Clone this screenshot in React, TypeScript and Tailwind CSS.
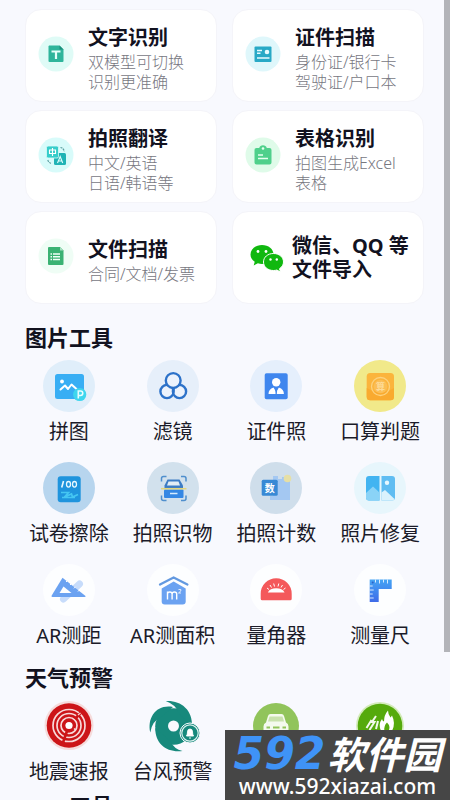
import React from 'react';

type Feature = {
  title: string;
  lines: string[];
  icon: React.ReactNode;
};

type Tool = {
  name: string;
  label?: string;
  icon: React.ReactNode;
};

const features: Feature[] = [
  {
    title: '文字识别',
    lines: ['双模型可切换', '识别更准确'],
    icon: (
      <>
        <circle cx="18" cy="18" r="17.5" fill="#dffbf6" />
        <path d="M11 9.5h10.5l4 4V25a1 1 0 0 1-1 1h-13a1 1 0 0 1-1-1V10.5z" fill="#2fb59b" />
        <path d="M21.5 9.5l4 4h-4z" fill="#1b8f7c" />
        <path d="M13.5 15.5h9M18 15.5v7.5" stroke="#e6fffa" strokeWidth="2.2" />
      </>
    ),
  },
  {
    title: '证件扫描',
    lines: ['身份证/银行卡', '驾驶证/户口本'],
    icon: (
      <>
        <circle cx="18" cy="18" r="17.5" fill="#dff7fb" />
        <rect x="9.5" y="10.5" width="17" height="15.5" rx="1" fill="#28a9c6" />
        <path d="M12 14.500h5M12 17.200h3.500M12 22h12.500" stroke="#e6fbff" strokeWidth="1.5" />
        <circle cx="22" cy="16" r="2.3" fill="#e6fbff" />
      </>
    ),
  },
  {
    title: '拍照翻译',
    lines: ['中文/英语', '日语/韩语等'],
    icon: (
      <>
        <circle cx="18" cy="18" r="17.5" fill="#d8fbfa" />
        <rect x="16" y="16" width="12" height="12" rx="1.5" fill="#1fb3b5" />
        <rect x="8.5" y="9" width="12" height="12" rx="1.5" fill="#36cdca" stroke="#d8fbfa" strokeWidth=".8" />
        <path d="M11.5 13h6v3.500h-6zM14.500 11v8" stroke="#fff" strokeWidth="1.1" fill="none" />
        <path d="M19.500 26l2.700-6.500 2.500 6.500M20.300 24h3.800" stroke="#dffcfb" strokeWidth="1.1" fill="none" />
        <path d="M22.500 10.500q3 .5 3.800 4M9.800 23q.8 3 4 3.500" stroke="#5b9fa1" strokeWidth="1.2" strokeDasharray="2 .8" fill="none" />
      </>
    ),
  },
  {
    title: '表格识别',
    lines: ['拍图生成Excel', '表格'],
    icon: (
      <>
        <circle cx="18" cy="18" r="17.5" fill="#dffbe9" />
        <path d="M11.5 11h2.700a4 4 0 0 1 7.600 0h2.700a2 2 0 0 1 2 2v12.500a2 2 0 0 1-2 2h-13a2 2 0 0 1-2-2V13a2 2 0 0 1 2-2z" fill="#4fd08b" />
        <circle cx="18" cy="11.5" r="1.3" fill="#e6fff0" />
        <path d="M13 18h5M13 21.500h10" stroke="#e6fff0" strokeWidth="1.5" />
      </>
    ),
  },
  {
    title: '文件扫描',
    lines: ['合同/文档/发票'],
    icon: (
      <>
        <circle cx="18" cy="18" r="17.5" fill="#effdf5" />
        <path d="M11 9h11l3.500 3.500V26a1 1 0 0 1-1 1H11a1 1 0 0 1-1-1V10a1 1 0 0 1 1-1z" fill="#3bb273" />
        <path d="M22 9l3.500 3.500H22z" fill="#a5e0bf" />
        <path d="M12.500 16h1.500M12.500 18.700h1.500M12.500 21.400h1.500M15 16h7M15 18.700h7M15 21.400h7" stroke="#f3fff8" strokeWidth="1.5" />
      </>
    ),
  },
];

const imageTools: Tool[] = [
  {
    name: '拼图',
    label: '拼图',
    icon: (
      <>
        <circle cx="26" cy="26" r="26" fill="#e0eefa" />
        <rect x="12" y="14" width="29" height="25" rx="2.5" fill="#38aef4" />
        <circle cx="19" cy="21.5" r="1.9" fill="#fff" />
        <path d="M17.500 29.500l4.500-4 3 3.500 3.500-4.500 5 4.500" stroke="#fff" strokeWidth="2" fill="none" strokeLinejoin="round" strokeLinecap="round" />
        <circle cx="36.7" cy="34.5" r="6.6" fill="#3ed6ee" />
        <path d="M35.300 38.500v-7.500h2.200a2.200 2.200 0 0 1 0 4.500h-2.200" stroke="#e7fdff" strokeWidth="1.6" fill="none" />
      </>
    ),
  },
  {
    name: '滤镜',
    label: '滤镜',
    icon: (
      <>
        <circle cx="26" cy="26" r="26" fill="#e6effa" />
        <g fill="#edf3fc" stroke="#2d72c9" strokeWidth="2.4">
          <circle cx="20" cy="31.5" r="6.6" />
          <circle cx="32.5" cy="31.5" r="6.6" />
          <circle cx="26.2" cy="20.5" r="7.4" />
        </g>
        <path d="M26.500 28q1.500 4-1 7" stroke="#2d72c9" strokeWidth="1.6" fill="none" />
      </>
    ),
  },
  {
    name: '证件照',
    label: '证件照',
    icon: (
      <>
        <circle cx="26" cy="26" r="26" fill="#e5effc" />
        <rect x="14.7" y="13.3" width="23" height="26" rx="1.8" fill="#3f86ee" />
        <circle cx="26.2" cy="22.3" r="4.2" fill="#fff" />
        <path d="M18.500 34q0-5 5-6.500l2.700 4.500 2.700-4.500q5 1.500 5 6.500z" fill="#fff" />
        <path d="M26.200 28l-1 1.500.4 4.500h1.200l.4-4.500z" fill="#3f86ee" />
      </>
    ),
  },
  {
    name: '口算判题',
    label: '口算判题',
    icon: (
      <>
        <circle cx="26" cy="26" r="26" fill="#f1e98a" />
        <rect x="12.7" y="13" width="27.3" height="27.3" rx="3.5" fill="#fbb43c" />
        <path d="M12.700 28v8.800a3.500 3.500 0 0 0 3.500 3.500h20.300a3.500 3.500 0 0 0 3.500-3.500V28q-13 8-27.300 0z" fill="#f9aa2f" />
        <circle cx="26.5" cy="26.5" r="9" fill="none" stroke="#fcd27e" strokeWidth="1.3" />
        <circle cx="26.5" cy="26.5" r="6.8" fill="#fbbe55" />
        <text x="26.5" y="30" textAnchor="middle" fontSize="9" fontWeight="700" fill="#fddb98">算</text>
      </>
    ),
  },
  {
    name: '试卷擦除',
    label: '试卷擦除',
    icon: (
      <>
        <circle cx="26" cy="26" r="26" fill="#b7d5ee" />
        <rect x="14.7" y="14.3" width="23" height="26" rx="3" fill="#1f94dd" />
        <path d="M20.500 19l-1.800 6.500" stroke="#e8f8ff" strokeWidth="1.6" />
        <ellipse cx="25.5" cy="22.3" rx="2" ry="2.8" stroke="#e8f8ff" strokeWidth="1.3" fill="none" />
        <ellipse cx="31.5" cy="22.3" rx="2" ry="2.8" stroke="#e8f8ff" strokeWidth="1.3" fill="none" />
        <path d="M18 30.500h7.500l-4 4.500 7-3 1 3 5.500-2.500M19 35.500h13" stroke="#45c6f2" strokeWidth="1.7" fill="none" />
      </>
    ),
  },
  {
    name: '拍照识物',
    label: '拍照识物',
    icon: (
      <>
        <circle cx="26" cy="26" r="26" fill="#d2e1ed" />
        <path d="M14.500 19.500v-3q0-2 2-2h3M34 14.500h3q2 0 2 2v3M39 33.500v3q0 2-2 2h-3M19.500 38.500h-3q-2 0-2-2v-3" stroke="#4f8fcd" strokeWidth="1.5" fill="none" />
        <path d="M20.500 17.500h12l3.500 6v3H17.500v-3z" fill="#3d7cc4" />
        <path d="M21.500 19.500h10l1.500 4h-13z" fill="#e3edf5" />
        <rect x="17" y="27.5" width="19.5" height="8.5" rx="1" fill="#3487e4" />
        <path d="M23 31.500h7.500" stroke="#d6ecff" strokeWidth="1.5" />
        <path d="M14 26.700h25.500" stroke="#e5d67c" strokeWidth="1.5" />
      </>
    ),
  },
  {
    name: '拍照计数',
    label: '拍照计数',
    icon: (
      <>
        <circle cx="26" cy="26" r="26" fill="#cfdeeb" />
        <path d="M23 14h5v3h4v-2h8v23H20V34h3z" fill="#a4c8f2" />
        <circle cx="37.5" cy="16.5" r="3.8" fill="#e6dfa5" />
        <rect x="11.7" y="17.7" width="16" height="16" rx="1.5" fill="#3889d5" />
        <text x="19.7" y="29.5" textAnchor="middle" fontSize="10" fontWeight="700" fill="#fff">数</text>
      </>
    ),
  },
  {
    name: '照片修复',
    label: '照片修复',
    icon: (
      <>
        <circle cx="26" cy="26" r="26" fill="#e7f6fc" />
        <path d="M15 14h10.500v24.500H15a3 3 0 0 1-3-3V17a3 3 0 0 1 3-3z" fill="#42b4f1" />
        <path d="M12 31l7-6.500 6.500 6v8H15a3 3 0 0 1-3-3z" fill="#8ad3f7" />
        <path d="M27.500 14H38a3 3 0 0 1 3 3v18.500a3 3 0 0 1-3 3H27.500z" fill="#5fbdf2" />
        <path d="M27.500 30.500l3.500-2.500 9.500 9q-1 1.500-2.500 1.500H27.500z" fill="#d9f2fd" />
        <circle cx="33" cy="20.8" r="2.2" fill="#e7f8ff" />
      </>
    ),
  },
  {
    name: 'AR测距',
    label: 'AR测距',
    icon: (
      <>
        <circle cx="26" cy="26" r="26" fill="#fdfeff" />
        <path d="M20.500 35l16-15" stroke="#c7dcfb" strokeWidth="7" strokeLinecap="round" />
        <path d="M19.500 13.700L42.500 32q.5 1-1 1H9.500q-1.500 0-.8-1.500z" fill="#6ba2f1" />
        <path d="M20.500 22.500l-4 6.500h12z" fill="#fdfeff" />
        <path d="M23 18l1.500-1.500M27 21l1.500-1.500M31 24.300l1.500-1.500M35 27.500l1.500-1.500" stroke="#fff" strokeWidth="1" />
      </>
    ),
  },
  {
    name: 'AR测面积',
    label: 'AR测面积',
    icon: (
      <>
        <circle cx="26" cy="26" r="26" fill="#fdfeff" />
        <path d="M13 20.500l13.600-7 13.800 7" stroke="#6399e0" strokeWidth="2.3" fill="none" strokeLinecap="round" strokeLinejoin="round" />
        <path d="M14.700 24.500l12-7 12 7V37.500a3 3 0 0 1-3 3h-18a3 3 0 0 1-3-3z" fill="#6ba2f1" />
        <path d="M20.500 35.500v-8M20.500 30q0-2 2.300-2t2.300 2v5.500M25.100 30q0-2 2.300-2t2.300 2v5.500" stroke="#fff" strokeWidth="1.4" fill="none" />
        <path d="M31.500 25.500h2.300v1.500l-2.300 2h2.500" stroke="#fff" strokeWidth=".8" fill="none" />
      </>
    ),
  },
  {
    name: '量角器',
    label: '量角器',
    icon: (
      <>
        <circle cx="26" cy="26" r="26" fill="#fdfeff" />
        <path d="M10.700 29.800a15.500 15.500 0 0 1 31 0v5q0 1.500-1.500 1.500h-28q-1.500 0-1.500-1.500z" fill="#f4595b" />
        <path d="M17.800 28.500a9 6.500 0 0 1 16.800 0z" fill="#fff" />
        <path d="M19 25.500l-2-1.500M21.500 23.500l-1.500-2.500M24.500 22.500l-.8-3M28 22.500l.8-3M31 23.500l1.500-2.500M33.500 25.500l2-1.500" stroke="#fff" strokeWidth="1" />
      </>
    ),
  },
  {
    name: '测量尺',
    label: '测量尺',
    icon: (
      <>
        <circle cx="26" cy="26" r="26" fill="#fdfeff" />
        <defs>
          <linearGradient id="ruler" x1="0" y1="0" x2="0" y2="1">
            <stop offset="0" stopColor="#45a4f4" />
            <stop offset="1" stopColor="#3f6be8" />
          </linearGradient>
        </defs>
        <path d="M15.700 15.500h22v9.500h-13v13h-9z" fill="url(#ruler)" />
        <path d="M21.500 15.500v3M25.500 15.500v4M29.500 15.500v3M33.500 15.500v4M15.700 22h3M15.700 26h4M15.700 30h3M15.700 34h4" stroke="#e9f4ff" strokeWidth=".9" />
        <circle cx="18.7" cy="18.5" r="1" fill="#2c62c9" />
      </>
    ),
  },
];

const weatherTools: Tool[] = [
  {
    name: '地震速报',
    label: '地震速报',
    icon: (
      <>
        <circle cx="26" cy="25.5" r="24.5" fill="#f5dcdc" />
        <circle cx="26" cy="25.5" r="22.3" fill="#cc1518" />
        <g fill="none" stroke="#f8dada" strokeWidth="1.7">
          <circle cx="26" cy="25.5" r="16" />
          <circle cx="26" cy="25.5" r="12" />
          <circle cx="26" cy="25.5" r="8" />
        </g>
        <path d="M26 25.500l-6 17M32 19l6-6.500" stroke="#cc1518" strokeWidth="2.6" />
        <circle cx="26" cy="25.5" r="3.6" fill="#fff" />
        <path d="M31 28.500l2 2M35 15l2.500-2" stroke="#f8dada" strokeWidth="1.2" />
      </>
    ),
  },
  {
    name: '台风预警',
    label: '台风预警',
    icon: (
      <>
        <circle cx="26.5" cy="26.5" r="18.3" fill="#17897c" />
        <path d="M18.800 1C33 0 46 9 45 27L31 12Q29 5 18.800 1z" fill="#17897c" />
        <path d="M3.300 32.500C0 18 9 4 26 7L14 17Q5 21 3.300 32.500z" fill="#17897c" />
        <path d="M35.500 51C20 53 8 44 8.300 28L24 42Q27 49 35.500 51z" fill="#17897c" />
        <circle cx="26.5" cy="26" r="5.5" fill="#f8f9fe" />
        <circle cx="43" cy="33" r="10" fill="#17897c" stroke="#f8f9fe" strokeWidth="1" />
        <circle cx="43" cy="33" r="8.2" fill="none" stroke="#dff2f0" strokeWidth="1.2" />
        <path d="M39.500 36q1-1.500 1-4a2.500 3 0 0 1 5 0q0 2.500 1 4zM42 38h2" fill="#fff" stroke="#fff" strokeWidth=".9" />
      </>
    ),
  },
  {
    name: '汽车',
    icon: (
      <>
        <circle cx="26" cy="26" r="23" fill="#91c45b" />
        <path d="M18 16q.5-2 2.500-2h11q2 0 2.500 2l2 6.500q2.500 1 2.500 4V39h-25V26.500q0-3 2.500-4z" fill="#f4faee" />
        <path d="M19.500 16.500h13l1.500 5H18z" fill="#c9e2ae" />
        <path d="M16.500 27.500h3.500M23 27.500h6.500M32.500 27.500h3.500" stroke="#91c45b" strokeWidth="1.8" />
      </>
    ),
  },
  {
    name: '火灾',
    icon: (
      <>
        <circle cx="26" cy="26" r="24" fill="#d3ebba" />
        <circle cx="26" cy="26" r="22.3" fill="#55aa0c" />
        <path d="M27 31q-3-7 1-12 .5 2 2 2.500Q30 15 34 10.500q0 4 2.500 7l1.500-2q4 8 0 15.500z" fill="#fff" />
        <path d="M30.500 31q-1-5 2.500-8.500 4 4 1.500 8.500z" fill="#55aa0c" />
        <path d="M22 16l-4 6h2.500l-5 8M17.500 20l-5 8M24 21l-2 8" stroke="#f2faea" strokeWidth="2" fill="none" />
      </>
    ),
  },
];

const FeatureCard: React.FC<{ feature: Feature }> = ({ feature }) => (
  <button className="flex h-[93px] items-center rounded-2xl border border-[#f4f4f9] bg-white pl-3 text-left">
    <svg viewBox="0 0 36 36" className="-mt-1 size-9 shrink-0">{feature.icon}</svg>
    <span className="ml-3.5 flex flex-col pt-1 whitespace-nowrap">
      <span className="text-[20px] leading-7 font-bold text-[#12121f]">{feature.title}</span>
      {feature.lines.map((line) => (
        <span key={line} className="text-[16px] leading-5 font-light text-[#77777f]">{line}</span>
      ))}
    </span>
  </button>
);

const ToolGrid: React.FC<{ tools: Tool[] }> = ({ tools }) => (
  <div className="mx-[-8px] mt-[7px] grid grid-cols-4 gap-y-4">
    {tools.map((tool) => (
      <button key={tool.name} aria-label={tool.name} className="flex flex-col items-center gap-1.5">
        <svg viewBox="0 0 52 52" className="size-[52px] overflow-visible">{tool.icon}</svg>
        {tool.label && <span className="text-[20px] leading-7 whitespace-nowrap text-[#1b1b29]">{tool.label}</span>}
      </button>
    ))}
  </div>
);

const App: React.FC = () => {
  return (
    <div className="relative flex h-screen overflow-hidden bg-[#f8f9fe] font-['Noto_Sans','Noto_Sans_CJK_SC',sans-serif]">
      <main className="min-w-0 flex-1 pt-[9px] pr-5 pl-[25px]">
        <div className="grid grid-cols-2 gap-x-[15px] gap-y-2">
          {features.map((feature) => (
            <FeatureCard key={feature.title} feature={feature} />
          ))}
          <button className="flex h-[93px] items-center rounded-2xl border border-[#f4f4f9] bg-white pl-[17px] text-left">
            <svg viewBox="0 0 34 28" className="h-7 w-[34px] shrink-0">
              <path d="M12 1C5.500 1 .500 5.200.500 10.500c0 3 1.500 5.500 4.200 7.300L3.700 21.500l4.200-2.200q2 .6 4.100.6C18.500 19.900 23.500 16 23.500 10.500S18.500 1 12 1z" fill="#10b80f" />
              <path d="M23.500 9.500c-5.800 0-10 3.700-10 8.500s4.200 8.500 10 8.500q1.700 0 3.300-.5l3.700 2-1-3.300c2.500-1.600 4-4 4-6.700 0-4.800-4.200-8.500-10-8.500z" fill="#10b80f" stroke="#fff" strokeWidth="1" />
              <g fill="#fff">
                <circle cx="8" cy="7.5" r="1.4" />
                <circle cx="16" cy="7.5" r="1.4" />
                <circle cx="20.5" cy="15.5" r="1.2" />
                <circle cx="26.8" cy="15.5" r="1.2" />
              </g>
            </svg>
            <span className="ml-2 text-[20px] leading-6 font-bold whitespace-nowrap text-[#12121f]">
              微信、QQ 等<br />文件导入
            </span>
          </button>
        </div>

        <h2 className="mt-[17px] text-[22px] leading-8 font-bold text-[#12121f]">图片工具</h2>
        <ToolGrid tools={imageTools} />

        <h2 className="mt-[11px] text-[22px] leading-8 font-bold text-[#12121f]">天气预警</h2>
        <ToolGrid tools={weatherTools} />

        <h2 className="mt-[3px] pl-11 text-[22px] leading-8 font-bold text-[#12121f]">工具</h2>
      </main>

      <div className="h-[652px] w-1.5 shrink-0 bg-[#b3b4b9]" />

      <div className="absolute right-0 bottom-0 flex h-[70px] w-1/2 flex-col items-center justify-end bg-[#464646] pb-0.5 text-white">
        <div className="flex items-center gap-0.5 whitespace-nowrap italic">
          <span className="font-['DejaVu_Sans',sans-serif] text-[44px] leading-10 font-bold text-[#3f93f7]">592</span>
          <span className="text-[38px] leading-10 font-bold">软件园</span>
        </div>
        <a href="http://www.592xiazai.com" className="text-[21px] leading-6 font-medium">www.592xiazai.com</a>
      </div>
    </div>
  );
};

export default App;
